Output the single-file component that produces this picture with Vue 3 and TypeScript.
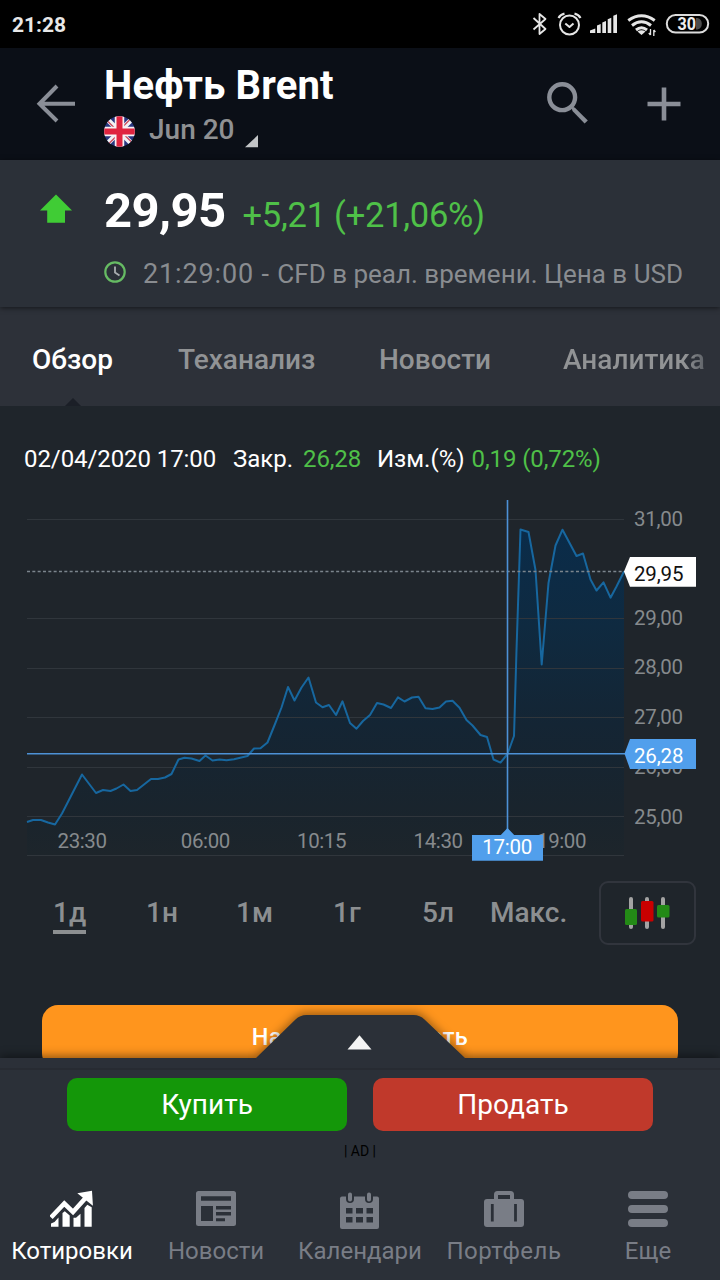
<script setup lang="ts">
import { ref } from 'vue'

type Point = [number, number]

const tabs = ['Обзор', 'Теханализ', 'Новости', 'Аналитика']
const periods = ['1д', '1н', '1м', '1г', '5л', 'Макс.']
const navItems = [
  { id: 'quotes', label: 'Котировки' },
  { id: 'news', label: 'Новости' },
  { id: 'calendar', label: 'Календари' },
  { id: 'portfolio', label: 'Портфель' },
  { id: 'more', label: 'Еще' },
]

const activeTab = ref(0)
const activePeriod = ref(0)
const activeNav = ref('quotes')

const gridLines = [519.5, 618.5, 668.5, 717.5, 767.5, 816.5, 855.5]
const priceLabels = [
  { text: '31,00', y: 526 },
  { text: '29,00', y: 625 },
  { text: '28,00', y: 674.3 },
  { text: '27,00', y: 724 },
  { text: '26,00', y: 773.7 },
  { text: '25,00', y: 823.5 },
]
const timeLabels = [
  { text: '23:30', x: 57.5 },
  { text: '06:00', x: 180.8 },
  { text: '10:15', x: 297 },
  { text: '14:30', x: 413.6 },
  { text: '19:00', x: 537 },
]

const series: Point[] = [
  [27, 822], [33, 820], [41, 820], [48, 822.5], [55, 824.5], [62, 813.5], [82, 774.5],
  [96, 793], [103, 790], [110.5, 791], [116.5, 788.5], [123.5, 784.5], [130.5, 791],
  [137, 790], [151, 779], [158, 779], [165, 777.5], [171.5, 774], [178.5, 759.5],
  [184.5, 757.7], [191.5, 758.5], [199.5, 761], [205.5, 755.5], [212.5, 760.5],
  [219.5, 759.5], [226.5, 760.3], [234, 759.3], [247.5, 756], [254, 748.5], [260.5, 748.3],
  [267.5, 742.5], [275, 724], [281.5, 707.5], [288, 687], [294.5, 700.5], [301.5, 687.5],
  [308.5, 677.5], [316, 702.5], [322.5, 707.2], [329, 705], [336, 715], [342.5, 701.3],
  [350, 723], [356.5, 728.7], [363, 721], [370, 715], [377, 703], [383.5, 704.5], [391, 708],
  [398, 697.3], [404.5, 701.5], [412, 697.5], [418.5, 696.7], [425.5, 708.3], [432.5, 709],
  [439.5, 707.5], [446, 701.5], [452.5, 700.7], [459.5, 707.7], [466.5, 720], [472.5, 725.5],
  [480.5, 735], [487, 737], [493.5, 759.5], [500.5, 762.6], [507.5, 754], [514, 736],
  [516.5, 650], [520.5, 529.5], [528.5, 532], [535.5, 570], [541.7, 664.5], [548.5, 583],
  [555.5, 545.5], [562.5, 529.7], [576.5, 556], [583, 553.5], [590.5, 579.5], [596.5, 590.5],
  [603.5, 582.3], [610.5, 597.7], [616.5, 586.5], [624, 571.5],
]
const linePoints = series.map((p) => p.join(',')).join(' ')
const areaPoints = `27,855 ${linePoints} 624,855`
</script>

<template>
  <main class="screen">
    <div class="status">
      <span class="clock">21:28</span>
      <svg class="status-icons" width="190" height="48" viewBox="530 0 190 48">
        <g fill="none" stroke="#e6e6e6" stroke-width="1.8" stroke-linejoin="round">
          <path d="M533.5 18 545.5 29 539.5 34V14l6 5-12 10.500" />
          <circle cx="569.500" cy="25" r="9.500" stroke-width="2" />
          <path d="M565.300 23.500l4.200 3.500 4-3.500" stroke-width="2" />
          <path d="M558.500 18q2-3.500 6-4.300M580.500 18q-2-3.500-6-4.300" stroke-width="2.200" />
        </g>
        <path
          d="M590 33v-2.500l5.300-2V33zM597 33v-7.500l3.700-1.500v9zM602.300 33V22.500l3.700-1.500v12zM607.700 33V19.300l3.600-1.500V33zM613.300 33V15.700l3.700-1.500V33z"
          fill="#e6e6e6"
        />
        <g fill="none" stroke="#e6e6e6" stroke-width="3">
          <path d="M628.300 20.500q13.200-9.500 26.400 0" />
          <path d="M632 25.500q9.500-7.500 19 0" />
          <path d="M636 30q5.500-4.500 11 0" />
        </g>
        <path d="M637.500 31.500q4-2.500 8 0l-4 3.500z" fill="#e6e6e6" />
        <path d="M650.500 29v6M648.800 33l1.700 2M653.800 36v-6M655.400 32l-1.600-2" fill="none" stroke="#e6e6e6" stroke-width="1.300" />
        <path d="M696 18h1.500a6 6 0 0 1 0 11.500H696z" fill="#4d4d4d" />
        <rect x="666.800" y="15" width="41.400" height="17.600" rx="8.800" fill="none" stroke="#dcdcdc" stroke-width="2" />
        <text x="677.500" y="29.700" class="battery" textLength="18.500" lengthAdjust="spacingAndGlyphs">30</text>
      </svg>
    </div>

    <header class="header">
      <svg class="back" width="40" height="40" viewBox="0 0 40 40">
        <path d="M21 2 3.500 19.800 21 37M3.500 19.800h35.500" fill="none" stroke="#8a8e97" stroke-width="4" />
      </svg>
      <div class="names">
        <h1>Нефть Brent</h1>
        <div class="contract">
          <svg class="flag" width="31" height="31" viewBox="0 0 31 31">
            <defs>
              <clipPath id="flag-round"><circle cx="15.500" cy="15.500" r="15.300" /></clipPath>
            </defs>
            <g clip-path="url(#flag-round)">
              <path d="M0 0h31v31H0z" fill="#293680" />
              <path d="M0 0l31 31M31 0L0 31" stroke="#f2f2f5" stroke-width="5" />
              <path d="M0 1.500l13 13M31 29.500l-13-13M29.500 0L17 12.500M1.500 31L14 18.500" stroke="#c94a5e" stroke-width="1.300" />
              <path d="M15.500 0v31M0 15.500h31" stroke="#f7f2f4" stroke-width="9.500" />
              <path d="M15.500 0v31M0 15.500h31" stroke="#e0243f" stroke-width="6" />
            </g>
          </svg>
          <span class="month">Jun 20</span>
          <svg class="corner" width="13" height="13" viewBox="0 0 13 13"><path d="M13 0v12.300H0z" fill="#c3c5c7" /></svg>
        </div>
      </div>
      <svg class="search" width="42" height="42" viewBox="0 0 42 42">
        <circle cx="15.200" cy="15.200" r="12.900" fill="none" stroke="#8a8e97" stroke-width="4.400" />
        <path d="M24 24l4 1.800 12.800 12.600-3.200 3.200L25.500 29z" fill="#8a8e97" />
      </svg>
      <svg class="add" width="34" height="34" viewBox="0 0 34 34">
        <path d="M17 .500v33M.500 17h33" stroke="#8a8e97" stroke-width="4.600" />
      </svg>
    </header>

    <section class="quote">
      <svg class="up" width="34" height="30" viewBox="0 0 34 30">
        <path d="M17 .500 33 16.500H26V28.800H8.200V16.500H1z" fill="#40cc35" />
      </svg>
      <div class="figures">
        <div class="price-row">
          <strong>29,95</strong>
          <span class="change">+5,21 (+21,06%)</span>
        </div>
        <div class="meta-row">
          <svg width="22" height="22" viewBox="0 0 22 22" fill="none">
            <circle cx="11" cy="11" r="9.700" stroke="#66bb63" stroke-width="2.200" />
            <path d="M11 5.500v6l4.500 3" stroke="#a9adb0" stroke-width="1.800" />
          </svg>
          <span class="meta"><span class="meta-time">21:29:00 - </span>CFD в реал. времени. Цена в USD</span>
        </div>
      </div>
    </section>

    <nav class="tabs">
      <a v-for="(tab, i) in tabs" :key="tab" :class="{ active: i === activeTab }" @click="activeTab = i">{{ tab }}</a>
    </nav>

    <section class="content">
      <div class="info">
        <span class="info-date">02/04/2020 17:00</span>
        <span class="info-close">Закр. <b>26,28</b></span>
        <span class="info-change">Изм.(%) <b>0,19 (0,72%)</b></span>
      </div>

      <svg class="chart" width="720" height="380" viewBox="0 490 720 380">
        <defs>
          <linearGradient id="area-fill" x1="0" y1="529" x2="0" y2="855" gradientUnits="userSpaceOnUse">
            <stop offset="0" stop-color="#0a2c4a" />
            <stop offset="0.300" stop-color="#0f2a40" />
            <stop offset="0.600" stop-color="#142534" />
            <stop offset="0.850" stop-color="#19242d" />
            <stop offset="1" stop-color="#1d252b" />
          </linearGradient>
        </defs>
        <polygon :points="areaPoints" fill="url(#area-fill)" />
        <path v-for="y in gridLines" :key="y" :d="`M27 ${y}H624`" class="grid" />
        <polyline :points="linePoints" class="line" />
        <path d="M27 571.500H624" class="last" />
        <text v-for="l in priceLabels" :key="l.text" x="634" :y="l.y" class="axis" textLength="49">{{ l.text }}</text>
        <text v-for="l in timeLabels" :key="l.text" :x="l.x" y="848.300" class="axis" textLength="49.500">{{ l.text }}</text>
        <path d="M27 753.700H626M507.500 500V830" class="cross" />
        <path d="M624 571.500l6-14.500h66v29.700h-66z" fill="#fff" />
        <text x="634" y="581" class="tag dark" textLength="49.500">29,95</text>
        <path d="M624.500 753.700l5.500-14.700h66v30h-66z" fill="#519fec" />
        <text x="634" y="762.800" class="tag" textLength="49.500">26,28</text>
        <path d="M472 835h28.800l6.700-7 6.700 7H543v25.700h-71z" fill="#519fec" />
        <text x="482.300" y="854.300" class="tag" textLength="50">17:00</text>
      </svg>

      <div class="ranges">
        <div class="periods">
          <a v-for="(p, i) in periods" :key="p" :class="{ active: i === activePeriod }" @click="activePeriod = i"><span>{{ p }}</span></a>
        </div>
        <button class="candles">
          <svg width="46" height="34" viewBox="0 0 46 34">
            <path d="M7 3v28M23 3v28M39 3v28" stroke="#a3a3a3" stroke-width="4" stroke-linecap="round" />
            <rect x="1" y="13" width="12" height="16" rx="1.500" fill="#238a16" />
            <rect x="17" y="5" width="12.500" height="20.500" rx="1.500" fill="#c90000" />
            <rect x="33" y="9" width="12.500" height="12.500" rx="1.500" fill="#238a16" />
          </svg>
        </button>
      </div>

      <button class="trade">Начните торговать</button>
    </section>

    <footer class="bottom">
      <svg class="handle" width="216" height="54" viewBox="252 1006 216 54">
        <path d="M256 1058l39.500-38.500q4.500-4.500 11-4.500h107q6.500 0 11 4.500L465 1058v2H256z" fill="#2b3038" />
        <path d="M359.500 1035.200l12 14.300h-24z" fill="#f4f4f4" />
      </svg>
      <div class="edge"></div>
      <div class="actions">
        <button class="buy">Купить</button>
        <button class="sell">Продать</button>
      </div>
      <div class="ad">| AD |</div>
      <nav class="nav">
        <a v-for="item in navItems" :key="item.id" :class="[item.id, { active: item.id === activeNav }]" @click="activeNav = item.id">
          <svg v-if="item.id === 'quotes'" width="44" height="40" viewBox="0 0 44 40" fill="currentColor">
            <path d="M1 36.700v-3.200l3.500-1.500 4-4.500v9.200zM12.500 36.700V23l2.300-1.800 4.900 4.300v11.200zM23.500 36.700v-9h2.500l4.500-4v13zM34.500 36.700V18l2.800-3.300 4.400 2.600v19.400z" />
            <path d="M1 27.500 14.300 13.500 23 22 36 7.500" fill="none" stroke="currentColor" stroke-width="4.600" />
            <path d="M27.300 3.300 42 .700l.9 15z" />
          </svg>
          <svg v-else-if="item.id === 'news'" width="44" height="40" viewBox="0 0 44 40">
            <rect x="2" y="1" width="40" height="35" rx="2.500" fill="currentColor" />
            <path d="M7 6.300h30v4.500H7zM7 16h12v15H7zM22 16h15v3.500H22zM22 22h15v3.500H22zM22 28.300h9v3H22z" fill="#2b3038" />
          </svg>
          <svg v-else-if="item.id === 'calendar'" width="44" height="40" viewBox="0 0 44 40">
            <rect x="2" y="6.500" width="39" height="32.500" rx="2" fill="currentColor" />
            <path d="M12 1v8M31 1v8" stroke="#2b3038" stroke-width="8" stroke-linecap="round" />
            <path d="M12 4.500v5M31 4.500v5" stroke="currentColor" stroke-width="4" stroke-linecap="round" />
            <path d="M8 18h6.500v5.500H8zM18 18h7v5.500h-7zM28.500 18H35v5.500h-6.500zM8 27h6.500v5.500H8zM18 27h7v5.500h-7zM28.500 27H35v5.500h-6.500z" fill="#2b3038" />
          </svg>
          <svg v-else-if="item.id === 'portfolio'" width="44" height="40" viewBox="0 0 44 40">
            <rect x="14" y="3" width="16" height="12" rx="1.500" fill="none" stroke="currentColor" stroke-width="4" />
            <rect x="2" y="9" width="40" height="28" rx="3" fill="currentColor" />
            <path d="M10.300 14v17.500M33.500 14v17.500" stroke="#2b3038" stroke-width="2.800" />
          </svg>
          <svg v-else width="44" height="40" viewBox="0 0 44 40">
            <path d="M6 5h32M6 19h32M6 33h32" stroke="currentColor" stroke-width="8" stroke-linecap="round" />
          </svg>
          <span>{{ item.label }}</span>
        </a>
      </nav>
    </footer>
  </main>
</template>

<style>
body {
  margin: 0;
  background: #1f252b;
}
</style>

<style scoped>
.screen {
  width: 720px;
  height: 1280px;
  display: flex;
  flex-direction: column;
  overflow: hidden;
  background: #1f252b;
  color: #fff;
  font-family: Roboto, 'Noto Sans', sans-serif;
}
button {
  border: 0;
  padding: 0;
  font: inherit;
  color: inherit;
}
a {
  cursor: pointer;
}
.status {
  height: 48px;
  flex: none;
  display: flex;
  justify-content: space-between;
  background: #000;
}
.clock {
  margin-left: 12px;
  line-height: 50px;
  font-size: 21px;
  font-weight: 700;
  color: #e8e8e8;
}
.battery {
  font-size: 17.500px;
  font-weight: 700;
  fill: #eee;
}
.header {
  height: 112px;
  flex: none;
  display: flex;
  background: #0b0f17;
}
.back {
  margin: 36px 0 0 36px;
}
.names {
  width: 441px;
  margin-left: 28px;
}
h1 {
  margin: 17px 0 0;
  font-size: 40px;
  line-height: 42px;
  font-weight: 700;
  letter-spacing: 0.150px;
  white-space: nowrap;
}
.contract {
  display: flex;
  height: 44px;
}
.flag {
  margin-top: 9px;
}
.month {
  margin-left: 14px;
  line-height: 46px;
  font-size: 28px;
  font-weight: 500;
  color: #8f9193;
}
.corner {
  margin: 28px 0 0 10px;
}
.search {
  margin: 34px 0 0 2px;
}
.add {
  margin: 39px 0 0 58px;
}
.quote {
  position: relative;
  z-index: 1;
  height: 147px;
  flex: none;
  display: flex;
  background: #2b3038;
  box-shadow: 0 1px 5px rgba(0, 0, 0, 0.55);
}
.up {
  margin: 34px 0 0 39px;
}
.figures {
  margin-left: 31px;
}
.price-row {
  display: flex;
  align-items: baseline;
  height: 92px;
  line-height: 102px;
  white-space: nowrap;
}
.price-row strong {
  font-size: 49px;
  font-weight: 700;
  letter-spacing: -0.6px;
}
.change {
  margin-left: 17px;
  font-size: 34.500px;
  letter-spacing: -0.250px;
  color: #4fc048;
}
.meta-row {
  display: flex;
  align-items: center;
  height: 42px;
  white-space: nowrap;
}
.meta-row svg {
  position: relative;
  top: -1px;
}
.meta {
  margin-left: 17px;
  padding-top: 1px;
  font-size: 26px;
  line-height: 44px;
  color: #898c90;
}
.meta-time {
  font-size: 27px;
  letter-spacing: 0.850px;
}
.tabs {
  height: 99px;
  flex: none;
  display: grid;
  grid-template-columns: 146px 201px 184px 1fr;
  padding-left: 32px;
  line-height: 106px;
  font-size: 28px;
  font-weight: 500;
  color: #919395;
  background: #2d3139;
  white-space: nowrap;
}
.tabs a {
  position: relative;
  height: 99px;
}
.tabs a.active {
  color: #fff;
}
.tabs a.active::after {
  content: '';
  position: absolute;
  left: 33px;
  bottom: 0;
  border: solid transparent;
  border-width: 0 8px 8px;
  border-bottom-color: #1b1f27;
}
.tabs a:last-child {
  background: linear-gradient(90deg, #919395 122px, #5d6167 142px);
  background-clip: text;
  color: transparent;
}
.content {
  height: 652px;
  flex: none;
  overflow: hidden;
}
.info {
  display: grid;
  grid-template-columns: 209px 144px 1fr;
  height: 84px;
  padding-left: 24px;
  line-height: 106px;
  font-size: 24px;
  white-space: nowrap;
}
.info b {
  font-weight: 400;
  color: #4fc048;
}
.info-date {
  letter-spacing: -0.080px;
}
.info-close b {
  margin-left: 4px;
  letter-spacing: -0.150px;
}
.info-change b {
  margin-left: 1px;
  letter-spacing: -0.100px;
}
.chart {
  display: block;
}
.grid {
  fill: none;
  stroke: #30363c;
  stroke-width: 1;
}
.line {
  fill: none;
  stroke: #17679f;
  stroke-width: 2;
  stroke-linejoin: round;
}
.last {
  stroke: #7b858d;
  stroke-width: 1.400;
  stroke-dasharray: 3 2.330;
}
.axis {
  font-size: 20.500px;
  fill: #868a8d;
}
.cross {
  fill: none;
  stroke: #4d91d6;
  stroke-width: 1.600;
}
.tag {
  font-size: 20.500px;
  fill: #fff;
}
.tag.dark {
  fill: #111;
}
.ranges {
  display: flex;
  justify-content: space-between;
  height: 86px;
  padding: 11px 24px 0 53px;
}
.periods {
  display: grid;
  grid-template-columns: 93px 90px 97px 89px 68px 90px;
  line-height: 63px;
  font-size: 28px;
  font-weight: 500;
  color: #8c8f91;
  white-space: nowrap;
}
.periods span {
  display: inline-block;
  height: 49px;
}
.periods .active span {
  border-bottom: 4px solid #8c8f91;
}
.candles {
  width: 97px;
  height: 64px;
  display: flex;
  align-items: center;
  justify-content: center;
  padding-right: 1px;
  border: 2px solid #31353d;
  border-radius: 9px;
  background: none;
}
.trade {
  display: block;
  width: 636px;
  height: 64px;
  margin: 38px auto 0;
  padding-bottom: 1px;
  border-radius: 16px;
  background: #ff951d;
  font-size: 23.500px;
  font-weight: 500;
  letter-spacing: 0.400px;
}
.bottom {
  position: relative;
  height: 222px;
  flex: none;
  background: #2b3038;
  box-shadow: 0 -2px 9px rgba(0, 0, 0, 0.45);
}
.handle {
  position: absolute;
  left: 252px;
  top: -52px;
  overflow: visible;
  clip-path: inset(-12px -12px 0 -12px);
  filter: drop-shadow(0 -3px 4px rgba(0, 0, 0, 0.35));
}
.edge {
  position: relative;
  height: 12px;
  box-sizing: border-box;
  border-bottom: 2px solid #272b32;
}
.actions {
  position: relative;
  display: flex;
  justify-content: center;
  gap: 26px;
  padding-top: 8px;
}
.actions button {
  width: 280px;
  height: 53px;
  border-radius: 10px;
  font-size: 28px;
  line-height: 51px;
}
.buy {
  background: #149709;
}
.sell {
  background: #c0392b;
}
.ad {
  margin-top: 11px;
  line-height: 18px;
  font-size: 14px;
  text-align: center;
  color: #000;
}
.nav {
  display: grid;
  grid-template-columns: repeat(5, 144px);
  margin-top: 30px;
  color: #797d86;
  font-size: 24px;
}
.nav a {
  display: flex;
  flex-direction: column;
  align-items: center;
}
.nav a.active {
  color: #fff;
}
.nav span {
  line-height: 42px;
}
.nav .portfolio span {
  letter-spacing: 0.500px;
}
</style>
